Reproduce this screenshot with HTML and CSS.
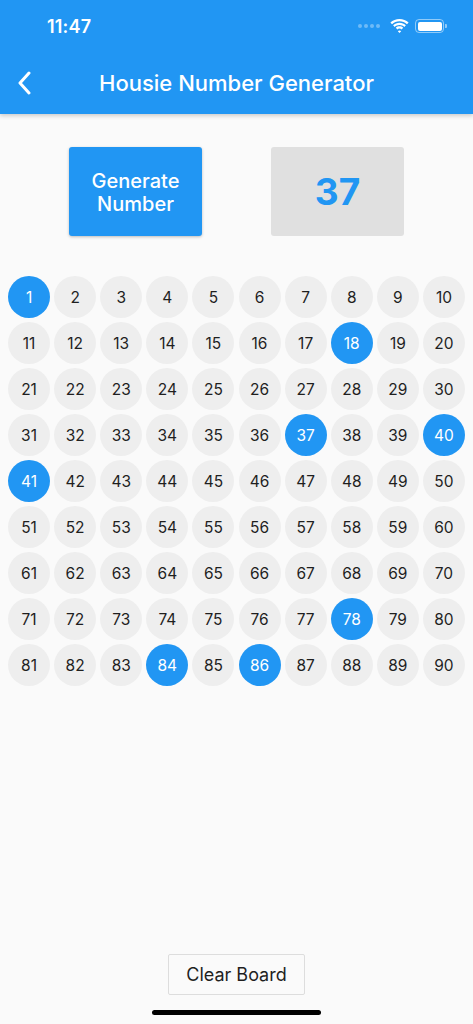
FILE: index.html
```html
<!DOCTYPE html>
<html lang="en">
<head>
    <meta charset="UTF-8">
    <meta name="viewport" content="width=device-width, initial-scale=1.0">
    <title>Housie Number Generator</title>
    <link rel="stylesheet" href="styles.css">
</head>
<body>
    <div class="screen">
        <header class="app-bar">
            <div class="status-bar">
                <span class="status-time">11:47</span>
                <div class="status-icons">
                    <span class="signal-dots"><i></i><i></i><i></i><i></i></span>
                    <svg class="wifi" width="19" height="14" viewBox="0 0 19 14">
                        <path d="M9.5 2.2c2.9 0 5.5 1.1 7.5 3l1.6-1.7C16.2 1.2 13 0 9.5 0S2.8 1.2.4 3.5L2 5.2c2-1.9 4.6-3 7.5-3z" fill="#fff"/>
                        <path d="M9.5 6c1.8 0 3.5.7 4.8 1.9l1.6-1.7C14.2 4.7 12 3.8 9.5 3.8S4.8 4.7 3.1 6.2l1.6 1.7C6 6.7 7.7 6 9.5 6z" fill="#fff"/>
                        <path d="M9.5 9.6c.8 0 1.5.3 2.1.8l1.6-1.7c-1-.9-2.3-1.4-3.7-1.4S6.8 7.8 5.8 8.7l1.6 1.7c.6-.5 1.3-.8 2.1-.8zM9.5 14l1.7-1.8c-.4-.4-1-.6-1.7-.6s-1.300.2-1.7.6z" fill="#fff"/>
                    </svg>
                    <span class="battery"><span class="battery-level"></span></span>
                </div>
            </div>
            <div class="toolbar">
                <svg class="back" width="14" height="24" viewBox="0 0 14 24">
                    <path d="M12 2L3 12l9 10" fill="none" stroke="#fff" stroke-width="3" stroke-linecap="round" stroke-linejoin="round"/>
                </svg>
                <h1 class="title">Housie Number Generator</h1>
            </div>
        </header>

        <main class="content">
            <div class="controls">
                <button class="button-generate">Generate<br>Number</button>
                <div class="current-number">37</div>
            </div>
            <div class="board" id="board"></div>
            <div class="footer">
                <button class="button-clear">Clear Board</button>
            </div>
        </main>
        <div class="home-indicator"></div>
    </div>

    <script>
        // Numbers already called
        const called = [1, 18, 37, 40, 41, 78, 84, 86];
        const board = document.getElementById('board');
        for (let n = 1; n <= 90; n++) {
            const cell = document.createElement('div');
            cell.className = 'cell';
            const ball = document.createElement('span');
            ball.className = called.includes(n) ? 'ball ball-called' : 'ball';
            ball.textContent = n;
            cell.appendChild(ball);
            board.appendChild(cell);
        }
    </script>
</body>
</html>
```

FILE: styles.css
```css
:root {
    --primary-blue: #2196f3;
    --background-light: #fafafa;
    --ball-gray: #eeeeee;
    --box-gray: #e0e0e0;
    --text-dark: #1f1f1f;
}

* {
    box-sizing: border-box;
}

body {
    font-family: Inter, Roboto, 'Noto Sans', sans-serif;
    margin: 0;
    padding: 0;
    background-color: var(--background-light);
    color: var(--text-dark);
}

.screen {
    position: relative;
    min-height: 100vh;
    display: flex;
    flex-direction: column;
}

.app-bar {
    background-color: var(--primary-blue);
    color: #fff;
    height: 114px;
    box-shadow: 0 2px 4px rgba(0, 0, 0, 0.18);
    position: relative;
    z-index: 1;
}

.status-bar {
    height: 52px;
    display: flex;
    align-items: center;
    justify-content: space-between;
    padding: 0 26px 0 47px;
}

.status-time {
    font-size: 18px;
    font-weight: 600;
    letter-spacing: 0.2px;
}

.status-icons {
    display: flex;
    align-items: center;
    gap: 6px;
}

.signal-dots {
    display: flex;
    gap: 2px;
    margin-right: 4px;
}

.signal-dots i {
    width: 4px;
    height: 4px;
    border-radius: 50%;
    background-color: rgba(255, 255, 255, 0.35);
}

.battery {
    position: relative;
    width: 29px;
    height: 14px;
    border: 1.5px solid rgba(255, 255, 255, 0.5);
    border-radius: 4px;
    padding: 1.5px;
    margin-right: 3px;
}

.battery::after {
    content: '';
    position: absolute;
    right: -4px;
    top: 3.5px;
    width: 2px;
    height: 4px;
    border-radius: 0 1px 1px 0;
    background-color: rgba(255, 255, 255, 0.5);
}

.battery-level {
    display: block;
    width: 100%;
    height: 100%;
    background-color: #fff;
    border-radius: 2px;
}

.toolbar {
    height: 62px;
    display: flex;
    align-items: center;
    position: relative;
    padding-left: 17px;
}

.title {
    position: absolute;
    left: 0;
    right: 0;
    margin: 0;
    text-align: center;
    font-size: 22px;
    font-weight: 500;
    pointer-events: none;
}

.content {
    flex: 1;
    display: flex;
    flex-direction: column;
    padding-top: 33px;
}

.controls {
    display: flex;
    justify-content: space-evenly;
}

.button-generate {
    width: 133px;
    height: 89px;
    border: none;
    border-radius: 3px;
    background-color: var(--primary-blue);
    color: #fff;
    font-family: inherit;
    font-size: 20px;
    font-weight: 500;
    line-height: 1.15;
    padding-top: 3px;
    box-shadow: 0 1px 3px rgba(0, 0, 0, 0.25);
    cursor: pointer;
}

.current-number {
    width: 133px;
    height: 89px;
    border-radius: 3px;
    background-color: var(--box-gray);
    color: var(--primary-blue);
    font-size: 37px;
    font-weight: 700;
    display: flex;
    align-items: center;
    justify-content: center;
}

.board {
    display: grid;
    grid-template-columns: repeat(10, 1fr);
    padding: 0 6px;
    margin-top: 38px;
}

.cell {
    padding: 2px;
    display: flex;
    justify-content: center;
}

.ball {
    width: 42px;
    height: 42px;
    border-radius: 50%;
    background-color: var(--ball-gray);
    display: flex;
    align-items: center;
    justify-content: center;
    font-size: 15.5px;
}

.ball-called {
    background-color: var(--primary-blue);
    color: #fff;
}

.footer {
    margin-top: auto;
    display: flex;
    justify-content: center;
    padding-bottom: 29px;
}

.button-clear {
    width: 137px;
    height: 41px;
    background-color: var(--background-light);
    border: 1px solid #dddddd;
    border-radius: 2px;
    font-family: inherit;
    font-size: 18px;
    color: var(--text-dark);
    cursor: pointer;
}

.home-indicator {
    position: absolute;
    bottom: 9px;
    left: 152px;
    width: 169px;
    height: 5px;
    border-radius: 3px;
    background-color: #000;
}
```
